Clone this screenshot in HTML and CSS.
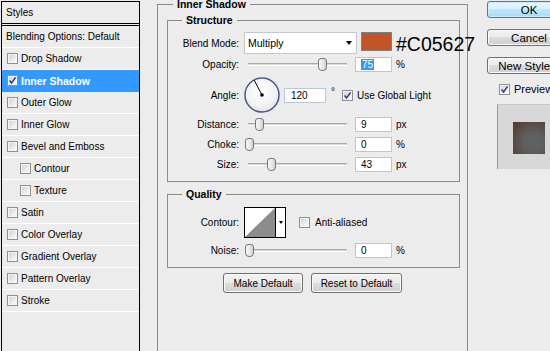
FILE: index.html
```html
<!DOCTYPE html>
<html>
<head>
<meta charset="utf-8">
<title>Layer Style</title>
<link rel="stylesheet" href="styles.css">
</head>
<body>
<div class="dialog">
  <nav class="styles-list">
    <div class="styles-head">Styles</div>
    <div class="item plain">Blending Options: Default</div>
    <div class="item"><span class="cb"></span>Drop Shadow</div>
    <div class="item active"><span class="cb"><svg viewBox="0 0 9 9" width="9" height="9"><path d="M1.6 4.4 L3.6 6.9 L7.6 1.4" fill="none" stroke="#2f4187" stroke-width="1.6"/></svg></span>Inner Shadow</div>
    <div class="item"><span class="cb"></span>Outer Glow</div>
    <div class="item"><span class="cb"></span>Inner Glow</div>
    <div class="item"><span class="cb"></span>Bevel and Emboss</div>
    <div class="item sub"><span class="cb"></span>Contour</div>
    <div class="item sub"><span class="cb"></span>Texture</div>
    <div class="item"><span class="cb"></span>Satin</div>
    <div class="item"><span class="cb"></span>Color Overlay</div>
    <div class="item"><span class="cb"></span>Gradient Overlay</div>
    <div class="item"><span class="cb"></span>Pattern Overlay</div>
    <div class="item"><span class="cb"></span>Stroke</div>
  </nav>

  <fieldset class="grp outer">
    <legend>Inner Shadow</legend>

    <fieldset class="grp structure">
      <legend>Structure</legend>
      <div class="row r-blend">
        <span class="lbl">Blend Mode:</span>
        <div class="select"><span>Multiply</span><span class="arrow"></span></div>
        <span class="color"></span>
        <span class="hex">#C05627</span>
      </div>
      <div class="row r-opacity">
        <span class="lbl">Opacity:</span>
        <div class="slider"><span class="track"></span><span class="thumb" style="left:74px"></span></div>
        <span class="field"><span class="hl">75</span></span>
        <span class="unit">%</span>
      </div>
      <div class="row r-angle">
        <span class="lbl">Angle:</span>
        <svg class="dial" viewBox="0 0 36 36" width="36" height="36">
          <defs>
            <radialGradient id="dialfill" cx="0.45" cy="0.4" r="0.65">
              <stop offset="0" stop-color="#ffffff"/>
              <stop offset="0.7" stop-color="#f1f1f1"/>
              <stop offset="1" stop-color="#dcdcdc"/>
            </radialGradient>
          </defs>
          <circle cx="18" cy="18" r="17" fill="url(#dialfill)" stroke="#4b5b88" stroke-width="1.5"/>
          <line x1="18" y1="18" x2="10.2" y2="3.2" stroke="#000" stroke-width="1"/>
          <circle cx="18" cy="18" r="1.8" fill="#000"/>
        </svg>
        <span class="field wide">120</span>
        <span class="deg">°</span>
        <span class="cb"><svg viewBox="0 0 9 9" width="9" height="9"><path d="M1.6 4.4 L3.6 6.9 L7.6 1.4" fill="none" stroke="#2f4187" stroke-width="1.6"/></svg></span>
        <span class="cbl">Use Global Light</span>
      </div>
      <div class="row r-distance">
        <span class="lbl">Distance:</span>
        <div class="slider"><span class="track"></span><span class="thumb" style="left:11px"></span></div>
        <span class="field">9</span>
        <span class="unit">px</span>
      </div>
      <div class="row r-choke">
        <span class="lbl">Choke:</span>
        <div class="slider"><span class="track"></span><span class="thumb" style="left:1px"></span></div>
        <span class="field">0</span>
        <span class="unit">%</span>
      </div>
      <div class="row r-size">
        <span class="lbl">Size:</span>
        <div class="slider"><span class="track"></span><span class="thumb" style="left:23px"></span></div>
        <span class="field">43</span>
        <span class="unit">px</span>
      </div>
    </fieldset>

    <fieldset class="grp quality">
      <legend>Quality</legend>
      <div class="row r-contour">
        <span class="lbl">Contour:</span>
        <div class="contour">
          <svg class="curve" viewBox="0 0 30 29" width="30" height="29">
            <polygon points="0,29 30,0 30,29" fill="#8c8c8c"/>
          </svg>
          <span class="cdrop"><span class="carrow"></span></span>
        </div>
        <span class="cb"></span>
        <span class="cbl">Anti-aliased</span>
      </div>
      <div class="row r-noise">
        <span class="lbl">Noise:</span>
        <div class="slider"><span class="track"></span><span class="thumb" style="left:1px"></span></div>
        <span class="field">0</span>
        <span class="unit">%</span>
      </div>
    </fieldset>

    <div class="defaults">
      <span class="btn make">Make Default</span>
      <span class="btn reset">Reset to Default</span>
    </div>
  </fieldset>

  <div class="side">
    <span class="btn big ok">OK</span>
    <span class="btn big">Cancel</span>
    <span class="btn big newstyle">New Style...</span>
    <div class="preview-check">
      <span class="cb"><svg viewBox="0 0 9 9" width="9" height="9"><path d="M1.6 4.4 L3.6 6.9 L7.6 1.4" fill="none" stroke="#2f4187" stroke-width="1.6"/></svg></span>
      <span class="cbl">Preview</span>
    </div>
    <div class="preview-box"><span class="preview-swatch"></span></div>
  </div>
</div>
</body>
</html>
```

FILE: styles.css
```css
* { box-sizing: border-box; }

html, body {
  margin: 0;
  padding: 0;
}

body {
  width: 550px;
  height: 351px;
  overflow: hidden;
  background: #ececec;
  font-family: "Liberation Sans", Arial, sans-serif;
  font-size: 10px;
  color: #000;
}

.dialog {
  display: flex;
  align-items: flex-start;
}

/* ---------- left list ---------- */
.styles-list {
  flex: none;
  width: 139px;
  height: 420px;
  margin: 1px 0 0 1px;
  border: 1px solid #000;
  background: #ececec;
}

.styles-head {
  height: 24px;
  line-height: 21px;
  padding-left: 4px;
  border-bottom: 3px double #000;
}

.item {
  height: 22px;
  display: flex;
  align-items: center;
  gap: 3px;
  padding-left: 5px;
  border-bottom: 1px solid #fff;
}

.item.plain {
  padding-left: 4px;
}

.item.sub {
  padding-left: 18px;
}

.item.active {
  background: #3399ff;
  border-bottom-color: #3399ff;
  color: #fff;
  font-weight: bold;
  font-size: 10.5px;
}

/* ---------- checkbox ---------- */
.cb {
  flex: none;
  width: 11px;
  height: 11px;
  border: 1px solid #8e8f8f;
  background: linear-gradient(135deg, #cfcfcf 0%, #ececec 60%, #fdfdfd 100%);
  box-shadow: inset 0 0 0 1px #f6f6f6;
  display: flex;
  align-items: center;
  justify-content: center;
}

.cb svg {
  display: block;
}

.cbl {
  white-space: nowrap;
}

/* ---------- group boxes ---------- */
.grp {
  margin: 0;
  padding: 0;
  min-width: 0;
  border: 1px solid #8a8a8a;
}

.grp > legend {
  font-weight: bold;
  font-size: 10.5px;
  line-height: 13px;
  padding: 0 4px;
}

.outer {
  flex: none;
  width: 311px;
  height: 420px;
  margin: -2px 0 0 17px;
}

.outer > legend {
  margin-left: 15px;
}

.structure {
  margin: 3px 7px 0 9px;
  padding-bottom: 9px;
}

.structure > legend,
.quality > legend {
  margin-left: 14px;
}

.quality {
  margin: 6px 7px 0 9px;
  padding-bottom: 9px;
}

/* ---------- rows ---------- */
.row {
  display: flex;
  align-items: center;
  height: 15px;
  margin-top: 5px;
}

.lbl {
  flex: none;
  width: 71px;
  margin-right: 5px;
  text-align: right;
  white-space: nowrap;
}

.r-blend {
  height: 22px;
  margin-top: 5px;
}

.r-opacity { margin-top: 3px; }
.r-angle { height: 36px; margin-top: 5px; }
.r-distance { margin-top: 4px; }

.r-contour {
  height: 31px;
  margin-top: 6px;
}

.select {
  flex: none;
  width: 113px;
  height: 22px;
  background: #fff;
  border: 1px solid #c4c8ce;
  display: flex;
  align-items: center;
  justify-content: space-between;
  padding: 0 4px 0 3px;
  font-size: 10.5px;
}

.arrow {
  width: 0;
  height: 0;
  border-left: 3.5px solid transparent;
  border-right: 3.5px solid transparent;
  border-top: 4px solid #000;
}

.color {
  flex: none;
  align-self: flex-start;
  width: 31px;
  height: 19px;
  margin-left: 4px;
  background: #c05627;
  border: 1px solid #7f7f7f;
}

.hex {
  flex: none;
  margin-left: 4px;
  margin-top: 2px;
  font-size: 19.5px;
  line-height: 22px;
  white-space: nowrap;
}

/* ---------- slider ---------- */
.slider {
  flex: none;
  position: relative;
  width: 106px;
  height: 15px;
}

.track {
  position: absolute;
  left: 4px;
  width: 99px;
  top: 6px;
  height: 3px;
  border-top: 1px solid #a9a9a9;
  border-bottom: 1px solid #fdfdfd;
  background: #d8d8d8;
}

.thumb {
  position: absolute;
  top: 1px;
  width: 9px;
  height: 13px;
  border: 1px solid #777;
  border-radius: 3px 3px 4px 4px;
  background: linear-gradient(90deg, #f7f7f7 0%, #e6e6e6 60%, #cfcfcf 100%);
}

/* ---------- text fields ---------- */
.field {
  flex: none;
  width: 37px;
  height: 15px;
  margin-left: 5px;
  padding-left: 5px;
  background: #fff;
  border: 1px solid #bcc6d2;
  line-height: 13px;
  font-size: 10px;
}

.field.wide {
  width: 42px;
  margin-left: 4px;
  padding-left: 6px;
}

.hl {
  display: inline-block;
  background: #3399ff;
  color: #fff;
  padding: 0 1px;
  line-height: 11px;
  margin-top: 1px;
}

.unit {
  margin-left: 4px;
}

.deg {
  margin-left: 5px;
  margin-right: 7px;
  align-self: flex-start;
  margin-top: 9px;
}

.r-angle .cb {
  margin-right: 4px;
}

.dial {
  flex: none;
  display: block;
}

/* ---------- contour ---------- */
.contour {
  flex: none;
  display: flex;
  width: 42px;
  height: 31px;
  border: 1px solid #000;
  background: #fff;
  margin-right: 13px;
}

.curve {
  display: block;
  flex: none;
}

.cdrop {
  flex: none;
  width: 10px;
  border-left: 1px solid #000;
  display: flex;
  align-items: center;
  justify-content: center;
}

.carrow {
  width: 0;
  height: 0;
  border-left: 2.5px solid transparent;
  border-right: 2.5px solid transparent;
  border-top: 3px solid #000;
}

.r-contour .cb {
  margin-right: 5px;
}

/* ---------- buttons ---------- */
.defaults {
  display: flex;
  justify-content: center;
  gap: 8px;
  margin-top: 5px;
}

.btn {
  display: flex;
  align-items: center;
  justify-content: center;
  height: 20px;
  border: 1px solid #707070;
  border-radius: 3px;
  background: linear-gradient(#f2f2f2 0%, #ebebeb 49%, #dddddd 50%, #cfcfcf 100%);
  box-shadow: inset 0 0 0 1px #fbfbfb;
  white-space: nowrap;
}

.btn.make { width: 80px; }
.btn.reset { width: 91px; }

/* ---------- right side ---------- */
.side {
  flex: none;
  width: 90px;
  margin: 1px 0 0 19px;
  display: flex;
  flex-direction: column;
}

.btn.big {
  width: 84px;
  height: 17px;
  font-size: 11.5px;
  margin-bottom: 11px;
}

.btn.ok {
  border-color: #3c7fb1;
  background: linear-gradient(#eaf6fd 0%, #d9f0fc 45%, #bee6fd 50%, #a7d9f5 100%);
  box-shadow: inset 0 0 0 1px #c9ebfb;
}

.btn.newstyle {
  margin-bottom: 9px;
}

.preview-check {
  display: flex;
  align-items: center;
  gap: 4px;
  height: 12px;
  padding-left: 12px;
  font-size: 11px;
}

.preview-box {
  margin: 9px 0 0 10px;
  width: 70px;
  height: 65px;
  background: #d8d8d8;
  border-left: 1px solid #9a9a9a;
  border-top: 1px solid #c8c8c8;
  padding: 17px 0 0 15px;
}

.preview-swatch {
  display: block;
  width: 32px;
  height: 32px;
  background: radial-gradient(circle at 64% 64%, #606363 0%, #5d5f5f 35%, #5a4c45 65%, #583528 100%);
}
```
